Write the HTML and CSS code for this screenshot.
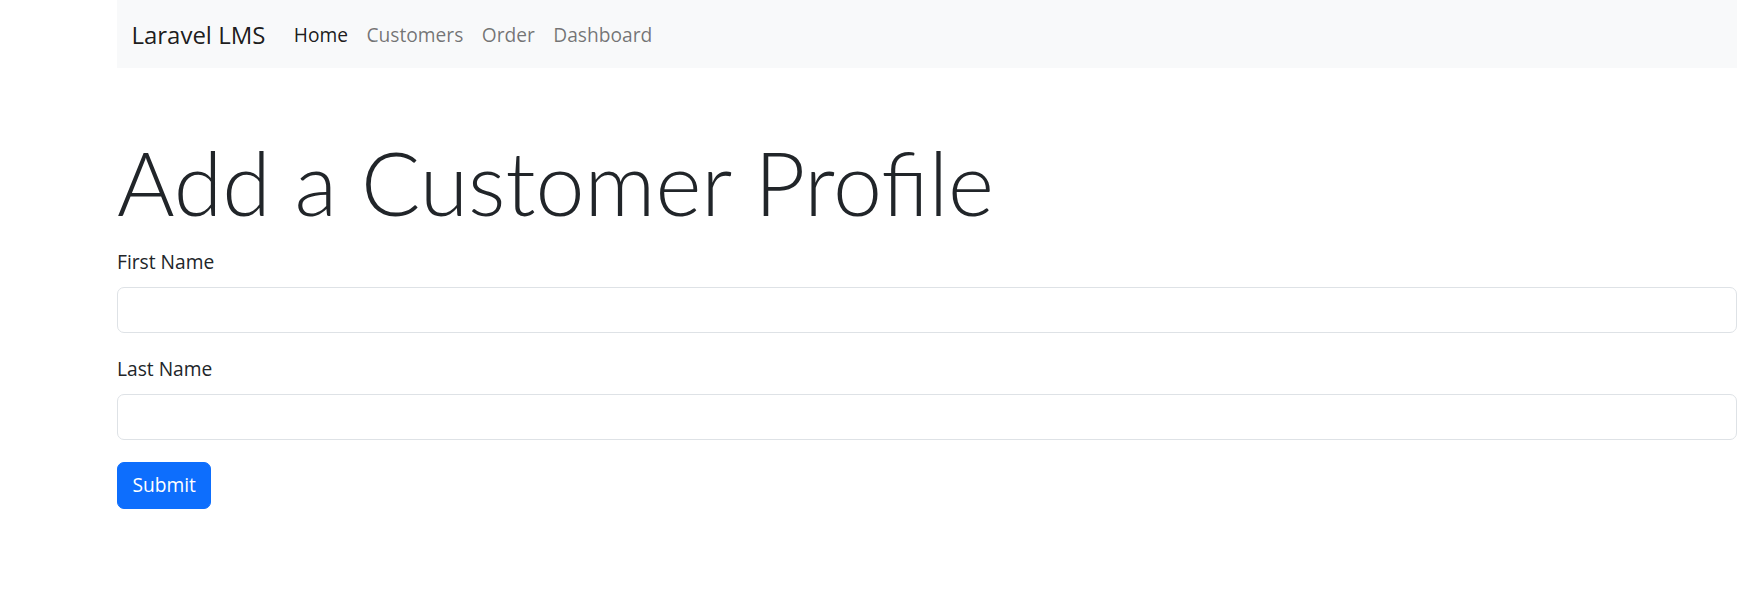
FILE: index.html
```html
<!DOCTYPE html>
<html lang="en">
<head>
<meta charset="utf-8">
<title>Laravel LMS</title>
<link rel="stylesheet" href="styles.css">
</head>
<body>
<div class="page">
  <nav class="navbar">
    <a class="brand" href="#">Laravel LMS</a>
    <ul class="nav">
      <li><a class="nav-link active" href="#">Home</a></li>
      <li><a class="nav-link" href="#">Customers</a></li>
      <li><a class="nav-link" href="#">Order</a></li>
      <li><a class="nav-link" href="#">Dashboard</a></li>
    </ul>
  </nav>
  <main class="content">
    <h1 class="title">Add a Customer Profile</h1>
    <form class="form">
      <div class="field">
        <label class="label" for="first">First Name</label>
        <input class="input" id="first" type="text">
      </div>
      <div class="field">
        <label class="label" for="last">Last Name</label>
        <input class="input" id="last" type="text">
      </div>
      <button class="btn" type="button">Submit</button>
    </form>
  </main>
</div>
</body>
</html>
```

FILE: styles.css
```css
* { box-sizing: border-box; }
html, body { margin: 0; padding: 0; background: #fff; }
body {
  font-family: "Open Sans", "Noto Sans", "Liberation Sans", sans-serif;
  font-size: 19.2px;
  line-height: 28.8px;
  color: #212529;
}
.page {
  padding: 0 26px 0 117px;
}
.navbar {
  height: 68px;
  background: #f8f9fa;
  display: flex;
  align-items: center;
  padding: 2px 14.4px 0;
}
.brand {
  font-size: 24px;
  line-height: 36px;
  color: rgba(0, 0, 0, 0.9);
  text-decoration: none;
  margin-right: 19.2px;
}
.nav {
  display: flex;
  list-style: none;
  margin: 0;
  padding: 0;
}
.nav-link {
  display: block;
  padding: 0 9.2px;
  color: rgba(0, 0, 0, 0.55);
  text-decoration: none;
}
.nav-link.active { color: rgba(0, 0, 0, 0.9); }
.content {
  padding-top: 57px;
}
.title {
  font-family: "Lato", "Open Sans", sans-serif;
  font-size: 88px;
  font-weight: 300;
  line-height: 115px;
  margin: 0 0 8px;
}
.field {
  margin-bottom: 22px;
}
.label {
  display: block;
  margin-bottom: 10px;
}
.input {
  display: block;
  width: 100%;
  height: 46px;
  border: 1px solid #dee2e6;
  border-radius: 7px;
  background: #fff;
  font: inherit;
  padding: 7px 14px;
}
.btn {
  font: inherit;
  background: #0d6efd;
  color: #fff;
  border: 1px solid #0d6efd;
  border-radius: 7px;
  height: 47px;
  padding: 0 14.4px;
  cursor: pointer;
}
```
